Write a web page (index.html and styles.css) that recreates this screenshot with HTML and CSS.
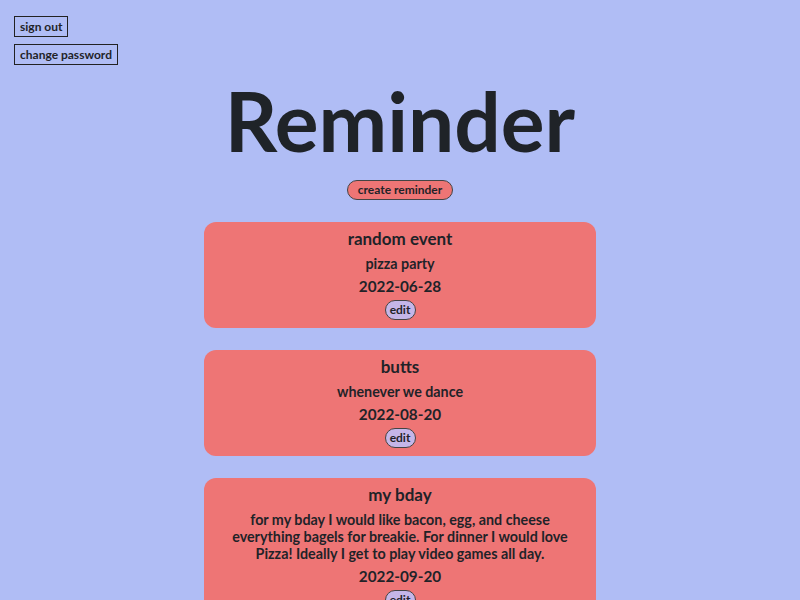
FILE: index.html
```html
<!DOCTYPE html>
<html>
<head>
<meta charset="utf-8">
<link rel="stylesheet" href="styles.css">
</head>
<body>
<nav class="account">
  <button class="plain-btn">sign out</button>
  <button class="plain-btn">change password</button>
</nav>
<header class="hero">
  <h1 class="title">Reminder</h1>
  <button class="pill-btn create">create reminder</button>
</header>
<main class="list">
  <section class="card">
    <h2 class="card-title">random event</h2>
    <p class="card-desc">pizza party</p>
    <p class="card-date">2022-06-28</p>
    <button class="pill-btn edit">edit</button>
  </section>
  <section class="card">
    <h2 class="card-title">butts</h2>
    <p class="card-desc">whenever we dance</p>
    <p class="card-date">2022-08-20</p>
    <button class="pill-btn edit">edit</button>
  </section>
  <section class="card">
    <h2 class="card-title">my bday</h2>
    <p class="card-desc">for my bday I would like bacon, egg, and cheese everything bagels for breakie. For dinner I would love Pizza! Ideally I get to play video games all day.</p>
    <p class="card-date">2022-09-20</p>
    <button class="pill-btn edit">edit</button>
  </section>
</main>
</body>
</html>
```
FILE: styles.css
```css
* { box-sizing: border-box; }
html, body { margin: 0; padding: 0; }
body {
  background: #b0bdf5;
  color: #1f2328;
  font-family: "Lato", "Liberation Sans", sans-serif;
  font-weight: 700;
  height: 600px;
  overflow: hidden;
}
.account {
  display: flex;
  flex-direction: column;
  align-items: flex-start;
  gap: 7px;
  padding: 16px 0 0 14px;
}
.plain-btn {
  font-family: inherit;
  font-weight: 700;
  font-size: 12px;
  color: #1f2328;
  background: #b0bdf5;
  border: 1.5px solid #222;
  height: 21px;
  padding: 0 5px;
  line-height: 18px;
}
.hero {
  display: flex;
  flex-direction: column;
  align-items: center;
}
.title {
  margin: 5px 0 0;
  font-size: 82px;
  line-height: 100px;
  font-weight: 700;
  letter-spacing: 0;
}
.pill-btn {
  font-family: inherit;
  font-weight: 700;
  color: #1f2328;
  border: 1.5px solid #444;
  border-radius: 10px;
  height: 20px;
  line-height: 16px;
  padding: 0 10px;
  font-size: 12px;
  white-space: nowrap;
}
.create {
  background: #ee7575;
  margin-top: 10px;
  min-width: 104px;
}
.list {
  display: flex;
  flex-direction: column;
  align-items: center;
  gap: 22px;
  margin-top: 22px;
}
.card {
  width: 392px;
  background: #ee7575;
  border-radius: 12px;
  padding: 5px 20px 8px;
  display: flex;
  flex-direction: column;
  align-items: center;
  text-align: center;
}
.card-title {
  margin: 0;
  font-size: 17px;
  line-height: 24px;
  font-weight: 700;
}
.card-desc {
  margin: 4px 0 0;
  font-size: 14.3px;
  line-height: 17px;
}
.card-date {
  margin: 4px 0 0;
  font-size: 15.3px;
  line-height: 20px;
}
.edit {
  margin-top: 4px;
  background: #c5b6e8;
  padding: 0 4px;
  width: 31px;
}
```
